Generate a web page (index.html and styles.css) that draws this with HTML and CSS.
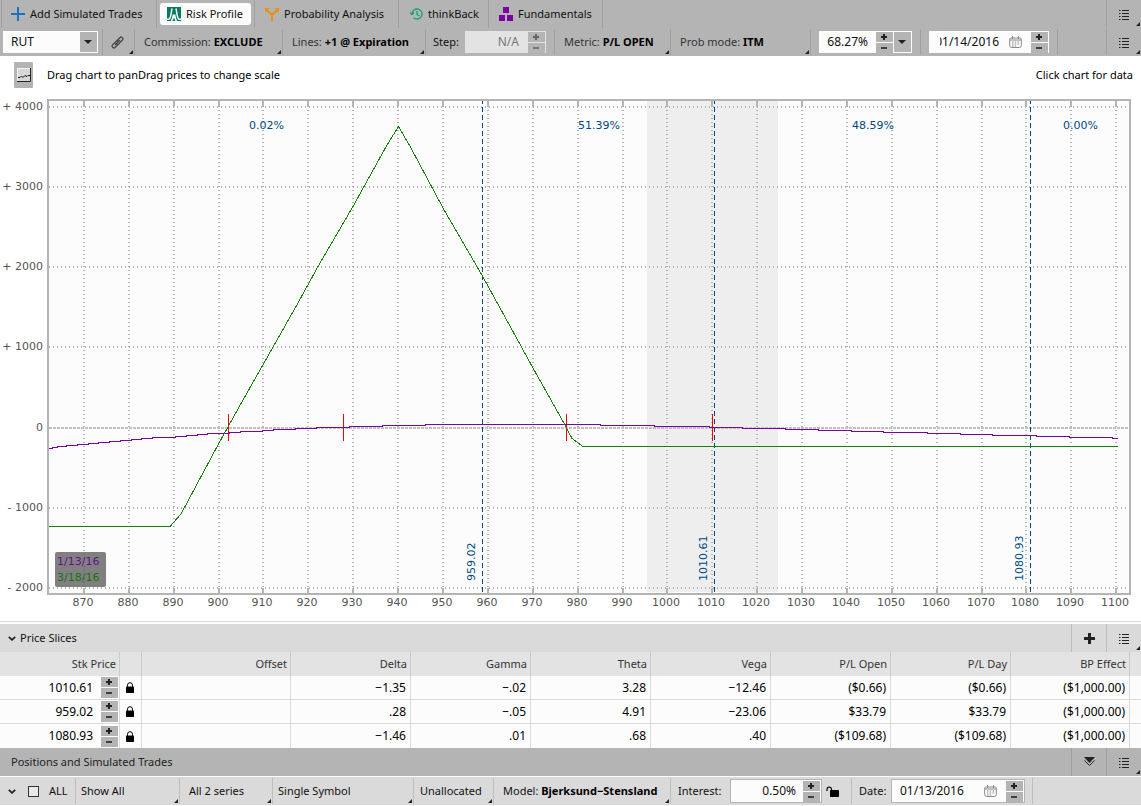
FILE: index.html
```html
<!DOCTYPE html>
<html lang="en">
<head>
<meta charset="utf-8">
<title>Risk Profile</title>
<link rel="stylesheet" href="styles.css">
</head>
<body>
<svg class="defs" aria-hidden="true">
  <symbol id="i-list" viewBox="0 0 10 11"><path d="M0 1.5h1.5M3 1.5h7M0 4.5h1.5M3 4.5h7M0 7.5h1.5M3 7.5h7M0 10.5h1.5M3 10.5h7" stroke="#222" fill="none"/></symbol>
  <symbol id="i-plus" viewBox="0 0 6 6"><path d="M3 0v6M0 3h6" stroke="currentColor" stroke-width="2" fill="none"/></symbol>
  <symbol id="i-minus" viewBox="0 0 6 6"><path d="M0 3h6" stroke="currentColor" stroke-width="1.6" fill="none"/></symbol>
  <symbol id="i-down" viewBox="0 0 8 4"><path d="M0 0h8L4 4z" fill="#222"/></symbol>
  <symbol id="i-chev" viewBox="0 0 8 5"><path d="M.8.8 4 3.8 7.2.8" stroke="#222" stroke-width="1.8" fill="none"/></symbol>
  <symbol id="i-lock" viewBox="0 0 8 11"><path d="M1.5 5V3.200a2.500 2.500 0 0 1 5 0V5" stroke="#000" fill="none"/><rect y="4.500" width="8" height="6.500" rx=".8"/></symbol>
  <symbol id="i-cal" viewBox="0 0 13 12"><path d="M1.500 2h10l.8 1v6.500q0 2-2 2H2.700q-2 0-2-2V3zM1 4h11M3.500 0v3M9.500 0v3" stroke="#888" fill="none"/><path d="M3 6h1.500M5.700 6h1.500M8.500 6H10M3 8h1.500M5.700 8h1.500M8.500 8H10M3 10h1.500M5.700 10h1.500" stroke="#888"/></symbol>
</svg>

<nav class="bar tabs">
  <button class="cell tab t-add"><svg width="14" height="14" viewBox="0 0 14 14"><path d="M7 0v14M0 7h14" stroke="#1f6fc8" stroke-width="2"/></svg>Add Simulated Trades</button>
  <div class="cell t-risk"><button class="pill" aria-current="page"><svg width="14" height="14" viewBox="0 0 14 14"><rect width="14" height="14" fill="#08795c"/><path d="M0 12.300h2C4 11.500 4 6 5 1.500M14 12.300h-2C10 11.500 10 6 9 1.500" stroke="#fff" stroke-width="1.400" fill="none"/><path d="M5.500 7.500h3V9L10 14H8.500L7 10.500 5.500 14H4l1.500-5z" fill="#fff"/></svg>Risk Profile</button></div>
  <button class="cell tab t-prob"><svg width="14" height="14" viewBox="0 0 14 14"><path d="M7 14V8L2 3M7 8l5-5" stroke="#e8920c" stroke-width="2" fill="none"/><path d="M0 1h4.500L0 5.500zM14 1H9.500L14 5.500z" fill="#e8920c"/></svg>Probability Analysis</button>
  <button class="cell tab t-back"><svg width="13" height="12" viewBox="0 0 13 12"><path d="M2 6a5 5 0 1 1 1.500 3.600M0 4.500 2 6.500 4 4.500M7 3v3.500L9.300 8" stroke="#12a17a" stroke-width="1.300" fill="none"/></svg>thinkBack</button>
  <button class="cell tab t-fund"><svg width="14" height="14" viewBox="0 0 14 14" fill="#7a00a5"><path d="M4 0h6v6H4zM0 8h6v6H0zM8 8h6v6H8z"/></svg>Fundamentals</button>
  <div class="cell grow"></div>
  <button class="cell menu c-list" aria-label="Tab options"><svg class="list"><use href="#i-list"/></svg></button>
</nav>

<div class="bar tools">
  <div class="combo"><select aria-label="Symbol"><option>RUT</option></select><svg width="8" height="4"><use href="#i-down"/></svg></div>
  <button class="cell menu c-link" aria-label="Link"><svg width="13" height="13" viewBox="0 0 13 13" fill="none" stroke="#444" stroke-width="1.200"><path d="M5.500 5 9 1.500q1-1 2 0l.5.5q1 1 0 2L7.500 8q-1 1-2 0M7.500 8 4 11.500q-1 1-2 0L1.500 11q-1-1 0-2l4-4q1-1 2 0M4 9l5-5"/></svg></button>
  <button class="cell menu c-comm">Commission: <b>EXCLUDE</b></button>
  <button class="cell menu c-lines">Lines: <b>+1 @ Expiration</b></button>
  <div class="cell c-step"><label for="step">Step:</label><span class="spin disabled"><input id="step" value="N/A" disabled><span class="steps"><button disabled aria-label="More"><svg><use href="#i-plus"/></svg></button><button disabled aria-label="Less"><svg><use href="#i-minus"/></svg></button></span></span></div>
  <button class="cell menu c-metric">Metric: <b>P/L OPEN</b></button>
  <button class="cell menu c-mode">Prob mode: <b>ITM</b></button>
  <div class="cell c-pct"><span class="spin"><input aria-label="Probability" value="68.27%"><span class="steps"><button aria-label="More"><svg><use href="#i-plus"/></svg></button><button aria-label="Less"><svg><use href="#i-minus"/></svg></button></span><button class="drop" aria-label="Choose"><svg><use href="#i-down"/></svg></button></span></div>
  <div class="cell c-date"><span class="spin"><span class="clip"><input aria-label="Date" value="01/14/2016"></span><svg class="cal"><use href="#i-cal"/></svg><span class="steps"><button aria-label="Later"><svg><use href="#i-plus"/></svg></button><button aria-label="Earlier"><svg><use href="#i-minus"/></svg></button></span></span></div>
  <div class="cell grow"></div>
  <button class="cell menu c-list" aria-label="Chart options"><svg class="list"><use href="#i-list"/></svg></button>
</div>

<main>
<div class="hint">
  <button class="shot" aria-label="Chart style"><svg width="14" height="14" viewBox="0 0 14 14"><rect width="14" height="14" fill="#f4f4f4"/><rect x="1" y="1" width="12" height="12" fill="#d8d8d8"/><path d="M13.500 0v13.500H0" stroke="#222" fill="none"/><path d="M1 9.500h2l1.500-1.500L6 9.500l2-2 2 1 1-1h2" stroke="#111" fill="none"/></svg></button>
  <span>Drag chart to panDrag prices to change scale</span><span class="right">Click chart for data</span>
</div>

<svg class="chart" viewBox="0 98 1141 523" role="img" aria-label="Profit and loss by price">
  <rect x="48" y="100" width="1082" height="493" fill="#fcfcfc"/>
  <rect x="647" y="101" width="131" height="491" fill="#eee"/>
  <g class="grid">
    <path class="vdots" d="M84 110V588M129 110V588M174 110V588M219 110V588M263 110V588M308 110V588M353 110V588M398 110V588M443 110V588M488 110V588M533 110V588M578 110V588M623 110V588M667 110V588M712 110V588M757 110V588M802 110V588M847 110V588M892 110V588M937 110V588M982 110V588M1026 110V588M1071 110V588M1116 110V588"/>
    <path class="hdots" d="M49 107H1129M49 187H1129M49 267H1129M49 347H1129M49 508H1129M49 588H1129"/>
    <path class="zero" d="M49 428H1129"/>
    <path d="M84 101v6M129 101v6M174 101v6M219 101v6M263 101v6M308 101v6M353 101v6M398 101v6M443 101v6M488 101v6M533 101v6M578 101v6M623 101v6M667 101v6M712 101v6M757 101v6M802 101v6M847 101v6M892 101v6M937 101v6M982 101v6M1026 101v6M1071 101v6M1116 101v6M84 588v5M129 588v5M174 588v5M219 588v5M263 588v5M308 588v5M353 588v5M398 588v5M443 588v5M488 588v5M533 588v5M578 588v5M623 588v5M667 588v5M712 588v5M757 588v5M802 588v5M847 588v5M892 588v5M937 588v5M982 588v5M1026 588v5M1071 588v5M1116 588v5"/>
    <rect x="48" y="100" width="1082" height="494"/>
  </g>
  <g class="curves">
    <path class="breakeven" d="M228.500 414v27M343.500 414v27M566.500 414v27M712.500 414v27"/>
    <path class="slice" d="M482.500 101V592M714.500 101V592M1030.500 101V592"/>
    <path class="now" d="M49 448.500H52V447.500H57V446.500H66V445.500H77V444.500H88V443.500H98V442.500H109V441.500H120V440.500H131V439.500H141V438.500H152V437.500H175V436.500H186V435.500H197V434.500H207V433.500H229V432.500H240V431.500H262V430.500H273V429.500H295V428.500H316V427.500H349V426.500H382V425.500H425V424.500H600V425.500H654V426.500H709V427.500H742V428.500H785V429.500H818V430.500H851V431.500H883V432.500H927V433.500H960V434.500H992V435.500H1036V436.500H1069V437.500H1112V438.500H1118"/>
    <path class="expiry" d="M49 526.500H170L181 514 219 443 228 427 243 400 296 306.500 318 266.500 353 206.500 387 145 398.500 126.500 411 148 443 208 483 277 533 368 565 425 572 438.500 583 446.500H1118"/>
  </g>
  <g class="axis" text-anchor="end">
    <text x="43" y="110">+ 4000</text><text x="43" y="190">+ 3000</text><text x="43" y="270">+ 2000</text><text x="43" y="350">+ 1000</text><text x="43" y="431">0</text><text x="43" y="511">- 1000</text><text x="43" y="591">- 2000</text>
  </g>
  <g class="axis" text-anchor="middle">
    <text x="83" y="606">870</text><text x="128" y="606">880</text><text x="173" y="606">890</text><text x="218" y="606">900</text><text x="262" y="606">910</text><text x="307" y="606">920</text><text x="352" y="606">930</text><text x="397" y="606">940</text><text x="442" y="606">950</text><text x="487" y="606">960</text><text x="532" y="606">970</text><text x="577" y="606">980</text><text x="622" y="606">990</text><text x="666" y="606">1000</text><text x="711" y="606">1010</text><text x="756" y="606">1020</text><text x="801" y="606">1030</text><text x="846" y="606">1040</text><text x="891" y="606">1050</text><text x="936" y="606">1060</text><text x="981" y="606">1070</text><text x="1025" y="606">1080</text><text x="1070" y="606">1090</text><text x="1115" y="606">1100</text>
  </g>
  <g class="mark">
    <text x="249" y="129">0.02%</text><text x="578" y="129">51.39%</text><text x="852" y="129">48.59%</text><text x="1063" y="129">0.00%</text>
    <text transform="translate(475 581) rotate(-90)">959.02</text><text transform="translate(707 581) rotate(-90)">1010.61</text><text transform="translate(1023 581) rotate(-90)">1080.93</text>
  </g>
  <rect x="55" y="552" width="51" height="35" rx="2" fill="#505050" fill-opacity=".72"/>
  <text class="key" x="57" y="565" fill="#6c0c94">1/13/16</text>
  <text class="key" x="57" y="581" fill="#1b7010">3/18/16</text>
</svg>
</main>

<section class="slices">
  <header class="bar light">
    <button class="title"><svg width="8" height="5"><use href="#i-chev"/></svg>Price Slices</button>
    <button class="cell c-add" aria-label="Add slice"><svg width="11" height="11" viewBox="0 0 11 11"><path d="M5.500 0v11M0 5.500h11" stroke="#222" stroke-width="3"/></svg></button>
    <button class="cell menu c-list" aria-label="Slice options"><svg class="list"><use href="#i-list"/></svg></button>
  </header>
  <table>
    <colgroup><col class="w-price"><col class="w-lock"><col><col class="w-num"><col class="w-num"><col class="w-num"><col class="w-num"><col class="w-num"><col class="w-num"><col class="w-bp"><col class="w-end"></colgroup>
    <thead><tr><th>Stk Price</th><th></th><th>Offset</th><th>Delta</th><th>Gamma</th><th>Theta</th><th>Vega</th><th>P/L Open</th><th>P/L Day</th><th>BP Effect</th><th></th></tr></thead>
    <tbody>
      <tr><td class="price"><div>1010.61<span class="steps"><button aria-label="More"><svg><use href="#i-plus"/></svg></button><button aria-label="Less"><svg><use href="#i-minus"/></svg></button></span></div></td><td class="lock"><svg><use href="#i-lock"/></svg></td><td></td><td>−1.35</td><td>−.02</td><td>3.28</td><td>−12.46</td><td>($0.66)</td><td>($0.66)</td><td>($1,000.00)</td><td></td></tr>
      <tr><td class="price"><div>959.02<span class="steps"><button aria-label="More"><svg><use href="#i-plus"/></svg></button><button aria-label="Less"><svg><use href="#i-minus"/></svg></button></span></div></td><td class="lock"><svg><use href="#i-lock"/></svg></td><td></td><td>.28</td><td>−.05</td><td>4.91</td><td>−23.06</td><td>$33.79</td><td>$33.79</td><td>($1,000.00)</td><td></td></tr>
      <tr><td class="price"><div>1080.93<span class="steps"><button aria-label="More"><svg><use href="#i-plus"/></svg></button><button aria-label="Less"><svg><use href="#i-minus"/></svg></button></span></div></td><td class="lock"><svg><use href="#i-lock"/></svg></td><td></td><td>−1.46</td><td>.01</td><td>.68</td><td>.40</td><td>($109.68)</td><td>($109.68)</td><td>($1,000.00)</td><td></td></tr>
    </tbody>
  </table>
</section>

<section>
  <header class="bar positions">
    <h2>Positions and Simulated Trades</h2>
    <button class="cell c-add" aria-label="Collapse"><svg width="11" height="10" viewBox="0 0 11 10"><path d="M0 0h11L5.500 6z" fill="#222"/><path d="M.5 3.500l5 5 5-5" stroke="#222" fill="none"/></svg></button>
    <button class="cell menu c-list" aria-label="Position options"><svg class="list"><use href="#i-list"/></svg></button>
  </header>
  <div class="bar light filters">
    <div class="c-all"><button class="open" aria-label="Expand"><svg width="8" height="5"><use href="#i-chev"/></svg></button><input type="checkbox" id="all"><label for="all">ALL</label></div>
    <button class="cell menu c-show">Show All</button>
    <button class="cell menu c-series">All 2 series</button>
    <button class="cell menu c-single">Single Symbol</button>
    <button class="cell menu c-unall">Unallocated</button>
    <button class="cell menu c-model">Model: <b>Bjerksund−Stensland</b></button>
    <div class="cell c-int"><label for="int">Interest:</label><span class="spin lined"><input id="int" value="0.50%"><span class="steps"><button aria-label="More"><svg><use href="#i-plus"/></svg></button><button aria-label="Less"><svg><use href="#i-minus"/></svg></button></span></span><svg width="13" height="11" viewBox="0 0 13 11"><path d="M1 5V3a2.300 2.300 0 0 1 4.500 0v2" stroke="#000" stroke-width="1.200" fill="none"/><rect x="4" y="4" width="9" height="7" rx=".8"/></svg></div>
    <div class="cell c-day"><label for="day">Date:</label><span class="spin lined"><input id="day" value="01/13/2016"><svg class="cal"><use href="#i-cal"/></svg><span class="steps"><button aria-label="Later"><svg><use href="#i-plus"/></svg></button><button aria-label="Earlier"><svg><use href="#i-minus"/></svg></button></span></span></div>
    <div class="cell grow"></div>
  </div>
</section>
</body>
</html>
```
FILE: styles.css
```css
* { box-sizing: border-box; }
body { margin: 0; background: #fff; color: #111; font: 11px/16px "Noto Sans", "Open Sans", sans-serif; }
button, input, select { font: inherit; color: inherit; margin: 0; padding: 0; border: 0; background: none; border-radius: 0; appearance: none; }
svg { flex: none; display: block; }
.defs { position: absolute; width: 0; height: 0; }

.bar { display: flex; height: 28px; background: #b4b4b4; }
.light { background: #dadada; }
.cell { display: flex; align-items: center; flex: none; border-left: 1px solid #a0a0a0; white-space: pre; }
.light .cell { border-color: #bebebe; }
.bar .grow { flex: 1; }
.menu { position: relative; }
.menu::after { content: ""; position: absolute; right: 1px; bottom: 2px; border: 2px solid; border-color: transparent #222 #222 transparent; }
.list { width: 10px; height: 11px; }
.c-list { width: 35px; padding-left: 12px; }
.c-add { width: 35px; justify-content: center; }

.tabs { padding-left: 1px; }
.tab { gap: 5px; padding-left: 9px; }
.t-add { width: 155px; }
.t-risk { width: 98px; padding-left: 3px; }
.t-prob { width: 144px; padding-left: 10px; }
.t-back { width: 90px; padding-left: 11px; }
.t-fund { width: 114px; padding-left: 10px; }
.pill { display: flex; align-items: center; gap: 5px; width: 91px; height: 22px; padding-left: 7px; border-radius: 3px; background: #fcfcfc; }

.tools { padding: 1px 0; }
.tools .menu::after { bottom: 1px; }
.combo { display: flex; align-items: center; position: relative; width: 102px; }
.combo select { width: 95px; height: 22px; margin-left: 3px; padding-left: 7px; border: 1px solid #fcfcfc; background: linear-gradient(to left, #b4b4b4 17px, #fcfcfc 17px); font-size: 12px; }
.combo svg { position: absolute; left: 84px; }
.c-link { width: 32px; padding-left: 8px; }
.c-comm { width: 148px; padding-left: 9px; color: #333; }
.c-lines { width: 143px; padding-left: 9px; color: #333; }
.c-step { width: 129px; padding-left: 7px; }
.c-step label { width: 32px; }
.c-metric { width: 116px; padding-left: 9px; color: #333; }
.c-mode { width: 140px; padding-left: 9px; color: #333; }
.c-pct { width: 110px; padding-left: 8px; }
.c-date { width: 137px; padding-left: 8px; }
b { color: #000; }

.spin { display: flex; align-items: center; height: 22px; padding-right: 1px; background: #fcfcfc; }
.spin input { flex: 1; min-width: 0; text-align: right; font-size: 12px; }
.c-step .spin { width: 81px; background: #e3e3e3; color: #777; }
.c-step input { margin-right: 9px; }
.c-pct .spin { width: 93px; gap: 1px; }
.c-pct input { margin-right: 7px; }
.c-date .spin { width: 120px; }
.clip { display: flex; justify-content: flex-end; overflow: hidden; width: 60px; margin-left: 11px; }
.spin .clip input { flex: none; width: 90px; }
.cal { width: 13px; height: 12px; margin: 0 9px 0 10px; }
.steps { display: flex; flex-direction: column; gap: 1px; flex: none; }
.steps button { display: flex; align-items: center; width: 17px; height: 10px; padding-left: 5px; background: #b4b4b4; color: #222; }
.steps button:disabled { color: #666; }
.steps svg { width: 6px; height: 6px; }
.drop { display: flex; align-items: center; width: 17px; height: 20px; padding-left: 4px; background: #b4b4b4; }
.drop svg { width: 8px; height: 4px; }

.hint { display: flex; align-items: center; height: 42px; padding: 0 8px 4px 14px; color: #000; }
.shot { display: flex; align-items: center; justify-content: center; width: 19px; height: 26px; margin-right: 14px; border-radius: 1px; background: #b4b4b4; }
.right { margin-left: auto; }

.chart { width: 100%; }
.chart text { font-family: "DejaVu Sans", sans-serif; font-size: 11px; }
.grid { fill: none; stroke: #b4b4b4; stroke-width: 2; shape-rendering: crispEdges; }
.vdots { stroke-dasharray: 1 3; }
.hdots { stroke-dasharray: 1 3; }
.zero { stroke: #c0c0c0; stroke-dasharray: 3 1; }
.curves { fill: none; stroke-width: 1; shape-rendering: crispEdges; }
.breakeven { stroke: #f00; }
.slice { stroke: #004a84; stroke-dasharray: 5 3; stroke-dashoffset: 2; }
.now { stroke: #7a00a5; }
.expiry { stroke: #1a800c; }
.axis { fill: #555; }
.mark { fill: #004a84; }

.slices { border-top: 1px solid #dadada; padding-top: 2px; }
.title { display: flex; align-items: center; gap: 4px; flex: 1; padding-left: 8px; }
table { width: 100%; table-layout: fixed; border-collapse: separate; border-spacing: 0; }
.w-price { width: 120px; }
.w-lock { width: 22px; }
.w-num { width: 120px; }
.w-bp { width: 119px; }
.w-end { width: 11px; }
th, td { height: 24px; padding: 0 4px; border-right: 1px solid #dadada; text-align: right; line-height: 16px; }
th { padding-right: 3px; background: #e3e3e3; border-color: #cacaca; color: #333; font-weight: 400; }
td { background: #fcfcfc; border-bottom: 1px solid #dadada; color: #000; font-size: 12px; }
tr:last-child td { border-bottom: 0; }
th:last-child, td:last-child { border-right: 0; }
.price { padding-right: 1px; }
.price div { display: flex; align-items: center; justify-content: flex-end; gap: 8px; }
.lock { padding: 0 6px; }
.lock svg { width: 8px; height: 11px; }

.positions h2 { flex: 1; margin: 0; padding-left: 11px; font-size: 11px; font-weight: 400; line-height: 28px; color: #222; }
.filters { margin-top: 1px; }
.filters .cell { margin: 1px 0; }
.filters .menu::after { bottom: 1px; }
.c-all { display: flex; align-items: center; width: 75px; padding-left: 8px; }
.open { margin-right: 12px; }
.c-all input { width: 11px; height: 11px; margin-right: 10px; border: 1px solid #333; background: #e8e8e8; }
.c-show { width: 104px; padding-left: 5px; }
.c-series { width: 93px; padding-left: 9px; }
.c-single { width: 141px; padding-left: 5px; }
.c-unall { width: 80px; padding-left: 6px; }
.c-model { width: 177px; padding-left: 9px; }
.c-int { width: 181px; padding-left: 7px; }
.c-int label { width: 52px; }
.lined { height: 24px; border: 1px solid #b4b4b4; }
.c-int .spin { width: 92px; margin-right: 4px; }
.c-int .spin input { margin-right: 7px; }
.c-day { width: 181px; padding-left: 7px; }
.c-day label { width: 32px; }
.c-day .spin { width: 134px; }
.c-day .spin input { text-align: left; padding-left: 8px; }
```
